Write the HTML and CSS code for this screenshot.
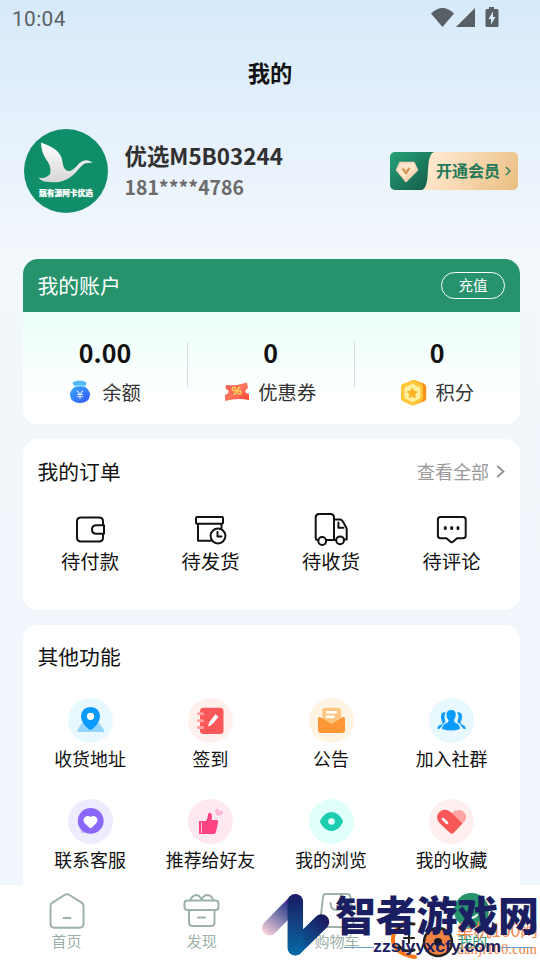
FILE: index.html
```html
<!DOCTYPE html>
<html lang="zh-CN">
<head>
<meta charset="utf-8">
<title>我的</title>
<link rel="stylesheet" href="styles.css">
</head>
<body>
<div class="app">
  <header class="status">
    <span class="time">10:04</span>
    <svg class="status-icons" viewBox="0 0 70 24">
      <path d="M0 6.500Q11.500-4.500 23 6.500L11.500 20Z"/><path d="M44 1V20H25Z"/>
      <path fill-rule="evenodd" d="M58 0h5v2h3q1.500 0 1.500 1.500v15q0 1.500-1.500 1.500h-10q-1.500 0-1.500-1.500v-15q0-1.500 1.500-1.500h2ZM62 4.500L57.500 12H60v5.500l4.500-7.500H62Z"/>
    </svg>
  </header>
  <main class="content">
    <h1 class="page-title">我的</h1>
    <section class="profile">
      <svg class="avatar" viewBox="0 0 84 84">
        <defs><linearGradient id="bird" x2="0" y2="1"><stop stop-color="#fff"/><stop offset="1" stop-color="#d6d6d6"/></linearGradient></defs>
        <circle cx="42" cy="42" r="42" fill="#108e69"/>
        <path fill="url(#bird)" d="M17 13.500C27 17 37 22 38.300 31.500C38.800 37 40.500 41 44 42C49 42.500 52 37.500 55.500 34Q60 30.300 64 31.500L69 33.500L61.500 34.300C57 36 54 42 48.500 46.500C42 52 35 53.600 28 53.200C20 52.800 16 51.500 14.800 48.400C19 50 24 48 26 45C27.500 40 25.500 35 22.500 31C19 26 17 20 17 13.500Z"/>
        <text x="15" y="67" textLength="54" lengthAdjust="spacingAndGlyphs">甄有源阿卡优选</text>
      </svg>
      <div class="identity"><div class="name">优选M5B03244</div><div class="phone">181****4786</div></div>
      <div class="vip">
        <svg class="vip-mark" viewBox="0 0 46 38">
          <defs><linearGradient id="vg" x2="1" y2="1"><stop stop-color="#26a27a"/><stop offset=".9" stop-color="#155f4a"/></linearGradient><linearGradient id="gem" x2="1" y2="1"><stop stop-color="#ffdcc7"/><stop offset=".5" stop-color="#ffebce"/><stop offset="1" stop-color="#e6a574"/></linearGradient></defs>
          <path fill="url(#vg)" d="M0 0H44C34 4 42 34 32 38H0Z"/>
          <path fill="url(#gem)" d="M10 10.500H24L27.500 18L16 29.500L6.500 18Z" stroke="#f9d3b4" stroke-width="1.500" stroke-linejoin="round"/>
          <path d="M12.500 16.500L16 21L19.500 16" fill="none" stroke="#d69358" stroke-width="2.400"/>
        </svg>
        <span class="vip-text">开通会员</span>
        <svg class="vip-arrow" viewBox="0 0 6 10"><path d="M1 1l4 4-4 4"/></svg>
      </div>
    </section>

    <section class="card account">
      <div class="account-head"><h2>我的账户</h2><span class="recharge">充值</span></div>
      <div class="account-body">
        <div class="stat"><b>0.00</b><div class="stat-label">
          <svg class="bag" viewBox="0 0 22 24"><defs><linearGradient id="bg" x2="1" y2="1"><stop stop-color="#37aaff"/><stop offset="1" stop-color="#3557f7"/></linearGradient></defs><path d="M4 2Q11-1 17 2Q18 5 15 7H7Q3 5 4 2Z" fill="#55b8ff"/><path d="M7 6Q11 4.500 15 6Q21 10 21 15Q20 23 11 23Q2 23 1 15Q1 10 7 6Z" fill="url(#bg)"/><path d="M6 6.500Q11 5 16 6.500" stroke="#8cdbff" stroke-width="1.500" fill="none"/><path d="M8 10.500l3 4 3-4M11 14v5M8 14.500h6M8 16.700h6" stroke="#d7ecff" stroke-width="1.100" fill="none"/></svg>
          <span>余额</span></div></div>
        <i class="divider"></i>
        <div class="stat"><b>0</b><div class="stat-label">
          <svg class="coupon" viewBox="0 0 24 20"><defs><linearGradient id="cg" x2="1" y2="1"><stop stop-color="#f25b46"/><stop offset=".5" stop-color="#ff765e"/><stop offset="1" stop-color="#fb3e2f"/></linearGradient></defs><path fill="url(#cg)" d="M1 3Q12 4 22 .500L23 6Q19 8 21 11L24 12V18Q12 15.500 0 19V13Q5 11 3 8L.500 7Z"/><path d="M9 13L15 4.500" stroke="#ffce55" stroke-width="1.500"/><circle cx="9" cy="7" r="1.700" fill="none" stroke="#ffce55" stroke-width="1.400"/><circle cx="14.500" cy="10.500" r="1.700" fill="none" stroke="#ffce55" stroke-width="1.400"/></svg>
          <span>优惠券</span></div></div>
        <i class="divider"></i>
        <div class="stat"><b>0</b><div class="stat-label">
          <svg class="coin" viewBox="0 0 26 28"><path fill="#f88b14" d="M13 1L24 5Q26 6 26 8V20Q26 22 24 23L13 27Z" stroke="#ffad35" stroke-width=".6"/><path fill="#ffc638" d="M10 2Q12 .500 14 1.500L21 5Q23 6 23 8V20Q23 22 21 23L14 27Q12 28 10 27L2 23Q0 22 0 20V8Q0 6 2 5Z"/><path fill="#fff0a0" d="M12 5L20 9V20L12 24L3.500 20V9Z"/><path fill="#ffb322" d="M11.700 8.500l1.800 3.800 4.200.6-3 3 .7 4.200-3.700-2-3.700 2 .7-4.200-3-3 4.200-.6Z"/></svg>
          <span>积分</span></div></div>
      </div>
    </section>

    <section class="card orders">
      <div class="card-head"><h2>我的订单</h2><span class="more">查看全部<svg viewBox="0 0 9 13"><path d="M1.200 1L7.500 6.500L1.200 12"/></svg></span></div>
      <div class="order-grid">
        <div class="order"><svg viewBox="0 0 36 36"><path d="M31 14V10.500Q31 6.500 27 6.500H9Q5 6.500 5 10.500V26.500Q5 30.500 9 30.500H27Q31 30.500 31 26.500V23"/><path d="M32 14.200H24.500Q20 14.200 20 18.500T24.500 22.800H32Z"/></svg><span>待付款</span></div>
        <div class="order"><svg viewBox="0 0 36 36"><rect x="3" y="6" width="27" height="6.700" rx="1"/><path d="M5 13V29.700H18M28.500 13V17"/><circle cx="25" cy="25" r="7.400"/><path d="M24.500 21V25.500H28.500"/></svg><span>待发货</span></div>
        <div class="order"><svg viewBox="0 0 36 36"><path d="M5.200 29H4.500Q2.700 29 2.700 26.500V6.500Q2.700 3 6 3H17.500Q21 3 21 6.500V29H13M21 8.500H27Q28.500 8.500 29.500 10L33 16Q33.700 17 33.700 19V28.500H31.200M21 29H23"/><circle cx="9.200" cy="30" r="3.900"/><circle cx="27.100" cy="29.300" r="3.900"/><path d="M25.400 11.500V16.800H30.500"/></svg><span>待收货</span></div>
        <div class="order"><svg viewBox="0 0 36 36"><path d="M6.500 6H29Q31.700 6 31.700 8.700V24.500Q31.700 27.300 29 27.300H23L19 30.700Q17.700 31.800 16.500 30.700L12.500 27.300H6.500Q3.900 27.300 3.900 24.500V8.700Q3.900 6 6.500 6Z"/><path class="dots" d="M11.300 16.500v1M17.700 16.500v1M24 16.500v1"/></svg><span>待评论</span></div>
      </div>
    </section>

    <section class="card functions">
      <div class="card-head"><h2>其他功能</h2></div>
      <div class="fn-grid">
        <div class="fn"><svg viewBox="0 0 45 45"><circle cx="22.500" cy="22.500" r="22.500" fill="#e7f8ff"/><path d="M14 25H31L36 32Q37 34 35 34H10Q8.500 34 9.500 32Z" fill="#94d4fd"/><path d="M22.500 9Q32 9.500 32 19Q31.500 25 25 30.500Q22.500 33 20 30.500Q13.500 25 13 19Q13 9.500 22.500 9Z" fill="#0b9bff"/><circle cx="22.500" cy="18.300" r="3.600" fill="#fff"/></svg><span>收货地址</span></div>
        <div class="fn"><svg viewBox="0 0 45 45"><circle cx="22.500" cy="22.500" r="22.500" fill="#ffefed"/><rect x="12" y="9.700" width="23.500" height="26.300" rx="3.500" fill="#fa5858"/><path d="M10.500 15.800h4M10.500 22.700h4M10.500 29.600h4" stroke="#ff9f9f" stroke-width="3" stroke-linecap="round"/><path d="M27.600 16.700L30 19L23.500 26.500L20.800 28L21.500 24.500Z" fill="#fff" stroke="#fff" stroke-width="1" stroke-linejoin="round"/></svg><span>签到</span></div>
        <div class="fn"><svg viewBox="0 0 45 45"><circle cx="22.500" cy="22.500" r="22.500" fill="#fff3e4"/><rect x="13.300" y="9.700" width="18.700" height="20" rx="3.500" fill="#ffc680"/><path d="M18 14.200h9M18 18.800h6.500" stroke="#fff" stroke-width="2.500" stroke-linecap="round"/><path d="M9 20Q10 18.500 12 19.500L22.500 26L33 19.500Q35 18.500 36 20V32Q36 35 33 35H12Q9 35 9 32Z" fill="#ff9638"/></svg><span>公告</span></div>
        <div class="fn"><svg viewBox="0 0 45 45"><circle cx="22.500" cy="22.500" r="22.500" fill="#e7f8ff"/><g fill="#0b9bff"><path d="M22.200 12Q27 12 26.800 17Q26.500 20 25 22Q24.500 24 28 25.500Q31 27 31 31Q22 34 13 31Q13 27 16.500 25.500Q20 24 19.500 22Q17.500 20 17.500 17Q17.500 12 22.200 12Z"/><path d="M16.800 14.500Q12 13.500 12 19Q12 22 13.500 24Q14 26 10 27.500Q8 28.500 8.500 31Q11 31.500 12 29Q13 26 16.500 24Q15.500 21 15.500 18Q15.500 16 16.800 14.500Z"/><path d="M27.800 14.500Q33 13.500 33 19Q33 22 31.500 24Q31 26 35 27.500Q37 28.500 36.500 31Q34 31.500 33 29Q32 26 28.300 24Q29.500 21 29.500 18Q29.500 16 27.800 14.500Z"/></g></svg><span>加入社群</span></div>
        <div class="fn"><svg viewBox="0 0 45 45"><circle cx="22.500" cy="22.500" r="22.500" fill="#efebff"/><path d="M13 25V34H22Z" fill="#cfc0ff"/><circle cx="22.700" cy="21.900" r="12.900" fill="#8a68fc"/><path d="M22.500 18Q25 16.200 27.800 17.700Q31.200 21 28 24.500L24 28.300Q22.500 30 21 28.300L17 24.500Q13.800 21 17.200 17.700Q20 16.200 22.500 18Z" fill="#fff"/></svg><span>联系客服</span></div>
        <div class="fn"><svg viewBox="0 0 45 45"><circle cx="22.500" cy="22.500" r="22.500" fill="#ffe8f1"/><path d="M11 22H18Q20 20 20 15.500Q20 13.500 22 13.700Q25 14.500 23.500 21H28.500Q30.500 21 30 23.500L28 33Q27.500 35 25.500 35H11Z" fill="#ff4382"/><path d="M13.500 23V34" stroke="#ffe8f1" stroke-width=".8"/><path d="M28 10Q31 9 31.500 12Q34.500 10.500 35.200 13.500Q35 16 29 17Q26 13 28 10Z" fill="#ffb9d5"/></svg><span>推荐给好友</span></div>
        <div class="fn"><svg viewBox="0 0 45 45"><circle cx="22.500" cy="22.500" r="22.500" fill="#e1fffb"/><path d="M11.500 21Q16 13 22.500 13T33.500 21Q34.500 22.500 33.500 24Q29 32 22.500 32T11.500 24Q10.500 22.500 11.500 21Z" fill="#1bceb0"/><circle cx="22.500" cy="22.500" r="3.300" fill="#e1fffb"/></svg><span>我的浏览</span></div>
        <div class="fn"><svg viewBox="0 0 45 45"><circle cx="22.500" cy="22.500" r="22.500" fill="#ffefef"/><path d="M22.500 14Q26 10.500 31 11Q37 12.500 37 18.500Q37 21 33 25L25 29Z" fill="#ffa3a3"/><path d="M10.500 13Q16 8.500 21.500 13L33.500 24.500L25 33.500Q23 36 20.500 33.500L10.500 24Q5.500 18 10.500 13Z" fill="#f85757"/><path d="M14 20L18 24" stroke="#fff" stroke-width="2.500" stroke-linecap="round"/></svg><span>我的收藏</span></div>
      </div>
    </section>
  </main>

  <nav class="tabs">
    <div class="tab"><svg viewBox="0 0 38 38"><path d="M2.500 14Q2.500 12 4.500 10.700L16.500 3Q19 1.300 21.500 3L33.500 10.700Q35.500 12 35.500 14V31.500Q35.500 35.700 31.500 35.700H6.500Q2.500 35.700 2.500 31.500Z"/><path d="M15.500 26H22.500"/></svg><span>首页</span></div>
    <div class="tab"><svg viewBox="0 0 38 38"><path d="M7 8.500Q9.500 3 13.500 3Q17 3.500 18.500 8Q20 3.500 24 3Q28.500 3 30.500 8.500"/><rect x="1.500" y="8.500" width="34" height="9.500" rx="3"/><path d="M6 18V30.500Q6 34 9.500 34H28Q31.500 34 31.500 30.500V18M15 25.500H22"/></svg><span>发现</span></div>
    <div class="tab"><svg viewBox="0 0 38 38"><path d="M8 2H29Q32 2 32.500 5L35.500 31Q36 35 32 35H5Q1.500 35 2 31L5 5Q5.500 2 8 2ZM12.500 11Q12.500 18 19 18T25.500 11"/></svg><span>购物车</span></div>
    <div class="tab active"><svg viewBox="0 0 38 38"><circle cx="18.500" cy="18.500" r="17.500"/><path d="M13 23Q18.500 29 24 23"/></svg><span>我的</span></div>
  </nav>

  <svg class="watermark" viewBox="0 0 290 80">
    <defs>
      <linearGradient id="wa" gradientUnits="userSpaceOnUse" x1="44" y1="18" x2="16" y2="54"><stop stop-color="#850084"/><stop offset=".25" stop-color="#39468c"/><stop offset=".6" stop-color="#8e88b4"/><stop offset="1" stop-color="#f6cdd8"/></linearGradient>
      <linearGradient id="wb" gradientUnits="userSpaceOnUse" x1="0" y1="20" x2="0" y2="75"><stop stop-color="#17236a"/><stop offset=".4" stop-color="#153f80"/><stop offset="1" stop-color="#066aa6"/></linearGradient>
      <linearGradient id="wc" gradientUnits="userSpaceOnUse" x1="74" y1="40" x2="44" y2="70"><stop stop-color="#1b1d62"/><stop offset="1" stop-color="#066aa6"/></linearGradient>
    </defs>
    <g fill="none" stroke-linecap="round">
      <path d="M45.300 21.700L19.500 48" stroke="url(#wa)" stroke-width="15"/>
      <path d="M71.500 42L45.500 67.500" stroke="url(#wc)" stroke-width="15.500"/>
      <path d="M45.300 21.700V67.700" stroke="url(#wb)" stroke-width="15.500"/>
      <path d="M156 43Q142 49 143 61Q145 74 165 77" stroke="#fb7418" stroke-width="4"/>
      <path d="M148 50Q151 42 164 44M149 66Q154 73 164 70" stroke="#222" stroke-width="3"/>
      <path d="M154 58h10M159 53v10" stroke="#222" stroke-width="2"/>
      <circle cx="188" cy="62" r="14" fill="#f08341" stroke="#222" stroke-width="2.500"/><circle cx="188" cy="62" r="4" fill="#1d1928"/>
    </g>
    <text class="wm-orange" x="206" y="57" textLength="82">单机100网</text>
    <text class="wm-site" x="207" y="74" textLength="80">danji100.com</text>
    <path d="M94 67.500h30M251 67.500h32" stroke="#6aa0cf" stroke-width="1"/>
    <text class="wm-name" x="85" y="51" textLength="204">智者游戏网</text>
    <text class="wm-domain" x="123" y="72" textLength="128" lengthAdjust="spacingAndGlyphs">zzslyyxcfy.com</text>
  </svg>
</div>
</body>
</html>
```

FILE: styles.css
```css
* { box-sizing: border-box; }
body { margin: 0; font-family: "Noto Sans CJK SC", "Noto Sans", sans-serif; color: #111; }
svg { display: block; flex: none; }
h1, h2 { margin: 0; }
.app { position: relative; width: 540px; height: 960px; overflow: hidden; display: flex; flex-direction: column; background: linear-gradient(#d7eafa 0, #e2effb 100px, #f2f7fc 250px, #f0f6fb 100%); }
.status { height: 38px; flex: none; display: flex; align-items: flex-start; justify-content: space-between; padding: 7px 39px 0 12px; color: #586066; }
.time { font: 400 20.800px/25px Roboto, sans-serif; letter-spacing: .4px; }
.status-icons { width: 70px; height: 24px; fill: #586066; }
.content { flex: 1; min-height: 0; overflow: hidden; padding: 0 20px 0 23px; }
.page-title { height: 72px; line-height: 69px; margin-left: -3px; text-align: center; font-size: 22.300px; font-weight: 700; }
.profile { display: flex; align-items: center; height: 84px; margin: 19px 2px 46px 1px; }
.avatar { width: 84px; height: 84px; }
.avatar text { font-size: 8px; font-weight: 900; fill: #fff; stroke: #fff; stroke-width: .2; }
.identity { margin-left: 16.500px; flex: 1; }
.name { font-size: 22.400px; line-height: 31px; font-weight: 700; color: #303030; }
.phone { font-size: 19.400px; line-height: 31px; font-weight: 700; color: #6b6b6b; }
.vip { width: 128px; height: 38px; border-radius: 5px; overflow: hidden; display: flex; align-items: center; background: linear-gradient(120deg, #fee6cb 35%, #eabe80); }
.vip-mark { width: 46px; height: 38px; }
.vip-text { font-size: 16px; line-height: 36px; height: 38px; font-weight: 700; color: #23795a; }
.vip-arrow { width: 6px; height: 10px; margin-left: 5px; fill: none; stroke: #23795a; stroke-width: 1.300; }
.card { border-radius: 15px; overflow: hidden; background: #fff; margin-bottom: 15px; }
.card h2, .account h2 { font-size: 20.800px; font-weight: 400; line-height: 30px; padding-bottom: 2px; margin-left: -.5px; }
.account { height: 165px; }
.account-head { height: 53px; padding: 0 15px; display: flex; align-items: center; justify-content: space-between; background: #26936c; color: #fff; }
.recharge { width: 64px; height: 27px; border: 1px solid #fff; border-radius: 14px; text-align: center; font-size: 14.500px; line-height: 24px; }
.account-body { height: 112px; display: flex; background: linear-gradient(#ebfffa, #fff 80%); }
.stat { flex: 1; padding-top: 21px; text-align: center; }
.stat:first-child { flex: 0 0 164px; }
.stat b { display: block; font-size: 25px; line-height: 38px; }
.stat-label { display: flex; align-items: center; justify-content: center; height: 42px; font-size: 19.300px; color: #333; }
.bag { width: 22px; height: 24px; margin-right: 11px; }
.coupon { width: 24px; height: 20px; margin-right: 9px; }
.coin { width: 27px; height: 27px; margin-right: 8px; }
.divider { width: 1px; height: 45px; margin-top: 30px; background: #d9dddc; }
.card-head { display: flex; justify-content: space-between; align-items: center; height: 64px; padding: 0 15px; }
.more { display: flex; align-items: center; color: #999; font-size: 18px; }
.more svg { width: 9px; height: 13px; margin-left: 7px; fill: none; stroke: #8e8e8e; stroke-width: 1.700; }
.orders { height: 171px; }
.orders h2 { padding-bottom: 0; }
.order-grid, .fn-grid { display: grid; grid-template-columns: repeat(4, 120.500px); justify-content: center; margin-left: -1.500px; }
.order-grid { padding-top: 8px; }
.order, .fn { display: flex; flex-direction: column; align-items: center; white-space: nowrap; }
.order svg { width: 36px; height: 36px; fill: none; stroke: #111; stroke-width: 2; stroke-linejoin: round; stroke-linecap: round; }
.order .dots { stroke-width: 3; }
.order span { font-size: 19.300px; line-height: 28px; }
.functions { height: 300px; }
.fn-grid { padding-top: 9px; grid-auto-rows: 101px; }
.fn svg { width: 45px; height: 45px; }
.fn span { font-size: 17.900px; line-height: 26px; margin-top: 2px; }
.tabs { flex: none; height: 75px; display: grid; grid-template-columns: repeat(4, 1fr); background: #fff; margin-left: -1px; }
.tab { display: flex; flex-direction: column; align-items: center; padding-top: 7px; color: #9db1a9; font-size: 15px; }
.tab svg { width: 38px; height: 38px; fill: none; stroke: #9db1a9; stroke-width: 2; stroke-linecap: round; stroke-linejoin: round; }
.tab span { line-height: 22px; }
.tab.active { color: #26936c; }
.tab.active circle { fill: #26936c; stroke: none; }
.tab.active path { stroke: #fff; }
.watermark { position: absolute; left: 250px; top: 880px; width: 290px; height: 80px; pointer-events: none; }
.wm-name { font-size: 41px; font-weight: 900; fill: #1b1f62; }
.wm-domain { font: 700 17px "Liberation Sans", sans-serif; fill: #1b1f62; }
.wm-orange { font-size: 18px; fill: #f78b51; }
.wm-site { font: 14px "Liberation Serif", serif; fill: #f67d3c; }
```
